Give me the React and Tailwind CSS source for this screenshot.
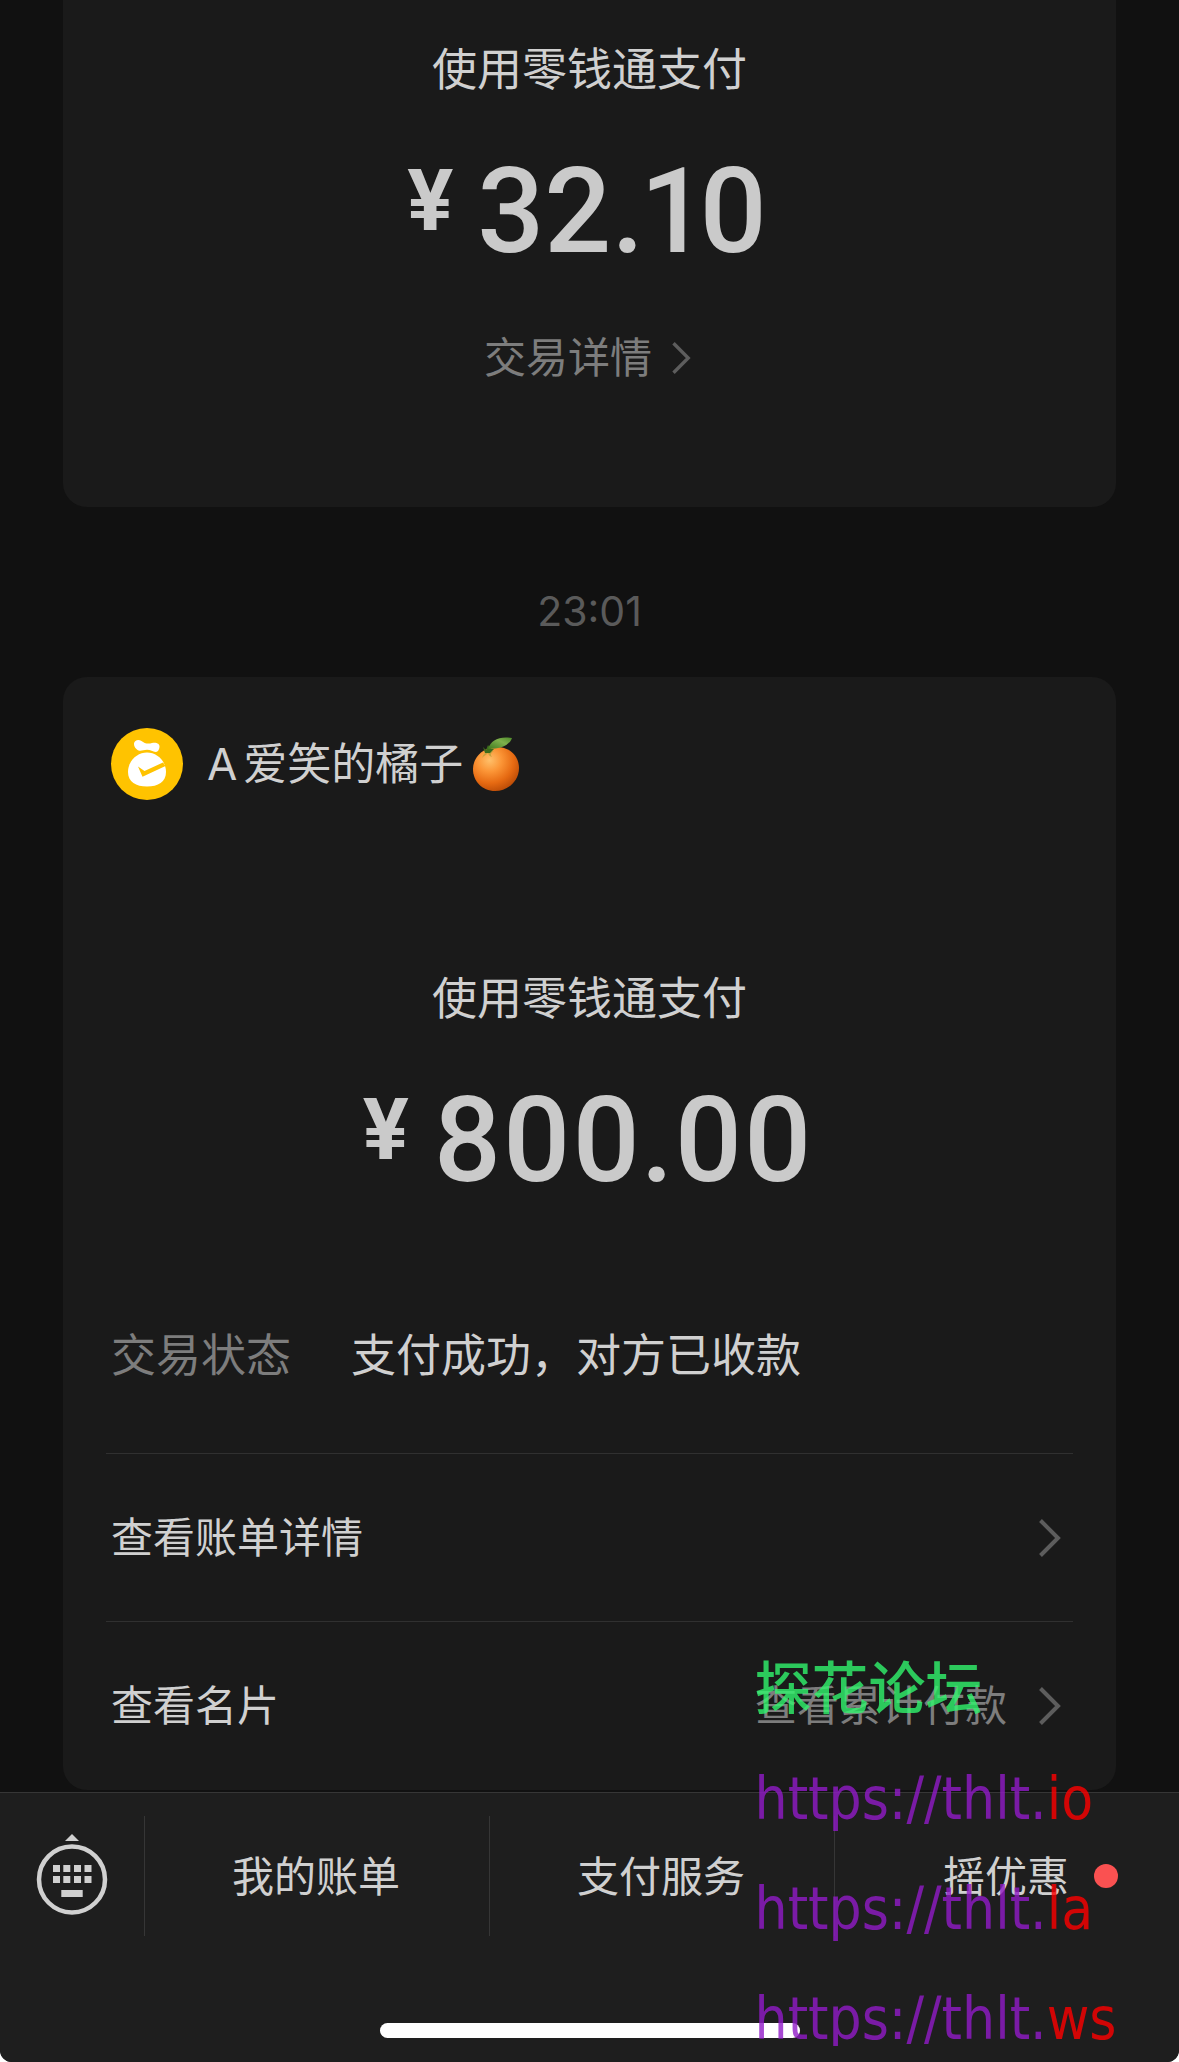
const Chevron = ({ className }) => {
	return (
		<svg viewBox="0 0 22 38" fill="none" className={className}>
			<path d="M1.5 1.5L19 19L1.5 36.5" stroke="currentColor" strokeWidth="4" />
		</svg>
	);
};

const MoneyBagIcon = () => {
	return (
		<svg viewBox="0 0 72 72" className="size-[72px] shrink-0">
			<circle cx="36" cy="36" r="36" fill="#ffc300" />
			<path
				d="M23 15.5C23.5 12 27.5 11 30.5 13C33.5 15.5 37 16.2 41 15C45 14 49 15.5 48.5 19C48.3 22 46.5 24 44.5 24C42 23.5 39.5 21.8 36 21.8C32.5 21.8 30 23.5 27.5 22.5C25 21.3 22.8 18.5 23 15.5Z"
				fill="#fff"
			/>
			<path
				d="M36 24.5C46 24.5 55 33 55 44C55 54 47 58.5 36 58.5C25 58.5 17 54 17 44C17 33 26 24.5 36 24.5Z"
				fill="#fff"
			/>
			<path d="M27 38.5L33.5 43L52 34.5L54.5 38L31.5 48.8Z" fill="#ffc300" />
		</svg>
	);
};

const OrangeIcon = () => {
	return (
		<svg viewBox="0 0 46 54" className="ml-1 h-[54px] w-[46px] shrink-0">
			<defs>
				<radialGradient id="peel" cx="0.36" cy="0.3" r="0.75">
					<stop offset="0" stopColor="#ffc06a" />
					<stop offset="0.35" stopColor="#fb9536" />
					<stop offset="0.7" stopColor="#e66a12" />
					<stop offset="1" stopColor="#b94a06" />
				</radialGradient>
				<linearGradient id="leaf" x1="0" y1="1" x2="1" y2="0">
					<stop offset="0" stopColor="#3f7a1e" />
					<stop offset="0.6" stopColor="#7fb04c" />
					<stop offset="1" stopColor="#4d8a2a" />
				</linearGradient>
			</defs>
			<path
				d="M22 10C36 9 46 19 46 31C46 44 35 54 22 54C9 54 0 44 0 32C0 21 9 11 22 10Z"
				fill="url(#peel)"
			/>
			<path
				d="M15 15C12 15 10 18 9 21C12 18 13 18 15 16C16 19 17 19 19 20C17 17 18 16 21 14Z"
				fill="#c9a23c"
			/>
			<path
				d="M10 10L13 13L15 8L18 12L21 12L17 16L12 16Z"
				fill="#3c6b1c"
			/>
			<path d="M15 12C18 3 26 -1 39 1C36 9 27 12 15 12Z" fill="url(#leaf)" />
		</svg>
	);
};

const KeyboardIcon = () => {
	return (
		<svg viewBox="0 1 72 84" fill="currentColor" className="h-[84px] w-[72px]">
			<path d="M36 1L43 8H29Z" />
			<circle
				cx="36"
				cy="46.4"
				r="33"
				fill="none"
				stroke="currentColor"
				strokeWidth="4.5"
			/>
			<path d="M17 32h7v7h-7zM27.3 32h7v7h-7zM38 32h7v7h-7zM48.5 32h7v7h-7z" />
			<path d="M17 43h7v7h-7zM27.3 43h7v7h-7zM38 43h7v7h-7zM48.5 43h7v7h-7z" />
			<path d="M25.3 57h21.4v7h-21.4z" />
		</svg>
	);
};

const Amount = ({ value }) => {
	return (
		<div className="mt-[52px] flex items-start justify-center gap-6 pr-1 font-[Roboto,sans-serif] text-[#cacaca]">
			<span className="mt-1.5 text-[86px] leading-[86px] font-bold">¥</span>
			<span className="text-[118px] leading-[120px] font-medium proportional-nums">
				{value}
			</span>
		</div>
	);
};

const CardLink = ({ label, extra }) => {
	return (
		<a
			href="#"
			className="flex h-[168px] items-center border-t border-[#303030] pr-3 pl-[5px] text-[42px]"
		>
			<span className="grow">{label}</span>
			<span className="text-[#7d7d7d]">{extra}</span>
			<Chevron className="ml-8 h-[38px] w-[22px] text-[#5d5d5d]" />
		</a>
	);
};

const MenuButton = ({ label, dot }) => {
	return (
		<button className="flex h-[120px] flex-1 items-center justify-center border-l border-[#363636] pr-0.5">
			<span className="relative">
				{label}
				{dot && (
					<span className="absolute top-1/2 left-full ml-[25px] size-6 -translate-y-1/2 rounded-full bg-[#fa5151]" />
				)}
			</span>
		</button>
	);
};

const sites = ["io", "la", "ws"];

const Watermark = () => {
	return (
		<div className="pointer-events-none absolute bottom-4 left-[64%] h-[412px] overflow-hidden leading-[110px] whitespace-nowrap opacity-80">
			<p className="text-[57px] font-medium text-[#31f56d]">探花论坛</p>
			{sites.map((site) => (
				<p
					key={site}
					className="font-['DejaVu_Sans_Condensed','DejaVu_Sans',sans-serif] text-[58px] text-[#911bc8]"
				>
					https://thlt.<span className="text-[#ff0000]">{site}</span>
				</p>
			))}
		</div>
	);
};

export default function App() {
	return (
		<div className="bg-white">
			<div className="relative overflow-hidden rounded-b-xl bg-[#111111] font-[Inter,'Noto_Sans_CJK_SC',sans-serif] text-[#d0d0d0]">
				<main className="px-[63px] pb-0.5">
					<section className="rounded-b-3xl bg-[#1a1a1a] pt-10 pb-[119px]">
						<p className="text-center text-[45px] leading-[60px]">使用零钱通支付</p>
						<Amount value="32.10" />
						<a
							href="#"
							className="mt-14 flex items-center justify-center gap-5 pr-1 text-[42px] leading-[60px] text-[#7d7d7d]"
						>
							交易详情
							<Chevron className="h-8 w-[19px] text-[#5d5d5d]" />
						</a>
					</section>

					<p className="pt-[74px] pb-9 text-center text-[41px] leading-[60px] text-[#5a5a5a]">
						23:01
					</p>

					<section className="rounded-3xl bg-[#1a1a1a] px-[43px] pt-[51px] pb-px">
						<div className="flex items-center px-[5px]">
							<MoneyBagIcon />
							<h2 className="ml-6 flex items-center gap-1.5 text-[44px] leading-[60px]">
								<span>A</span>
								<span>爱笑的橘子</span>
								<OrangeIcon />
							</h2>
						</div>
						<p className="mt-[169px] text-center text-[45px] leading-[60px]">
							使用零钱通支付
						</p>
						<Amount value="800.00" />
						<dl className="mt-[125px] mb-[67px] flex gap-[60px] px-[5px] text-[45px] leading-[60px]">
							<dt className="text-[#7d7d7d]">交易状态</dt>
							<dd>支付成功，对方已收款</dd>
						</dl>
						<CardLink label="查看账单详情" />
						<CardLink label="查看名片" extra="查看累计付款" />
					</section>
				</main>

				<footer className="border-t border-[#363636] bg-[#1e1e1e] pt-[23px] pb-6">
					<nav className="flex text-[42px]">
						<button
							aria-label="键盘"
							className="flex h-[120px] w-36 items-center justify-center"
						>
							<KeyboardIcon />
						</button>
						<MenuButton label="我的账单" />
						<MenuButton label="支付服务" />
						<MenuButton label="摇优惠" dot />
					</nav>
					<div className="mx-auto mt-[87px] h-[15px] w-[420px] rounded-full bg-white" />
				</footer>

				<Watermark />
			</div>
		</div>
	);
}
